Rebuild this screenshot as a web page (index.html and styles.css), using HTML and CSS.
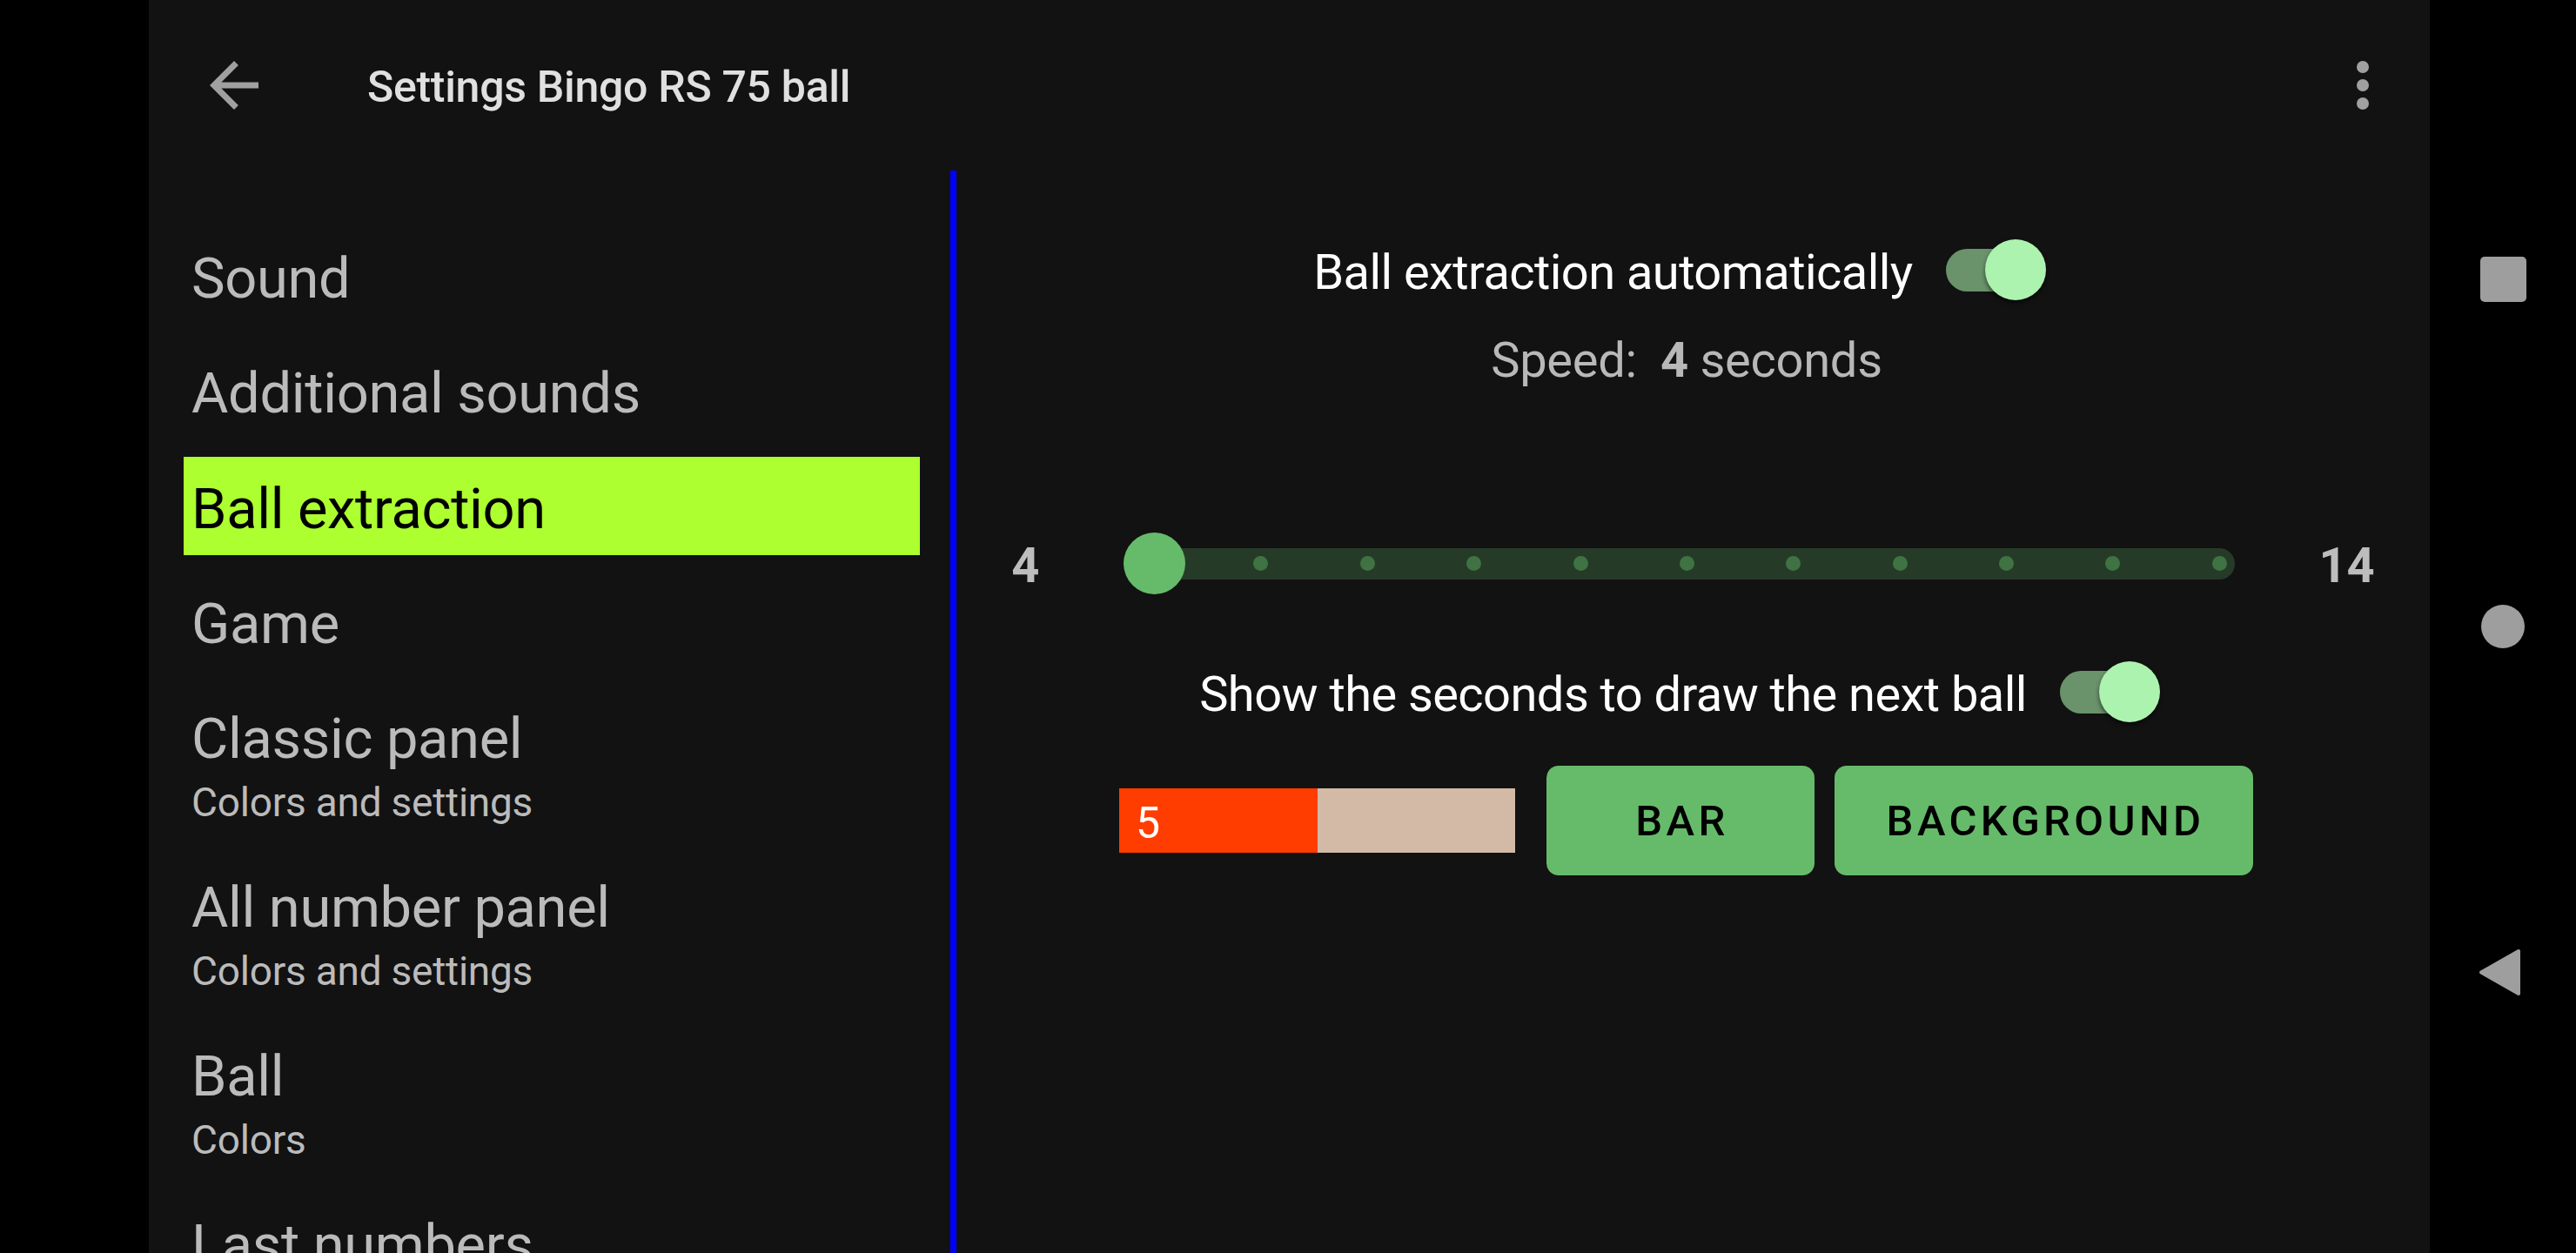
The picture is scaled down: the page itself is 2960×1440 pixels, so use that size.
FILE: index.html
```html
<!DOCTYPE html>
<html lang="en">
<head>
<meta charset="utf-8">
<title>Settings Bingo RS 75 ball</title>
<link rel="stylesheet" href="styles.css">
</head>
<body>
<div class="screen">
  <div class="cutout"></div>
  <div class="app">
    <header class="toolbar">
      <svg class="nav-icon" viewBox="0 0 24 24"><path d="M20 11H7.83l5.59-5.59L12 4l-8 8 8 8 1.41-1.41L7.83 13H20v-2z"/></svg>
      <h1 class="title">Settings Bingo RS 75 ball</h1>
      <svg class="more-icon" viewBox="0 0 24 24"><circle cx="12" cy="6" r="2"/><circle cx="12" cy="12" r="2"/><circle cx="12" cy="18" r="2"/></svg>
    </header>
    <div class="body">
      <nav class="menu">
        <div class="item"><div class="item-title">Sound</div></div>
        <div class="item"><div class="item-title">Additional sounds</div></div>
        <div class="item active"><div class="item-title">Ball extraction</div></div>
        <div class="item"><div class="item-title">Game</div></div>
        <div class="item"><div class="item-title">Classic panel</div><div class="item-sub">Colors and settings</div></div>
        <div class="item"><div class="item-title">All number panel</div><div class="item-sub">Colors and settings</div></div>
        <div class="item"><div class="item-title">Ball</div><div class="item-sub">Colors</div></div>
        <div class="item"><div class="item-title">Last numbers</div><div class="item-sub">Colors</div></div>
      </nav>
      <div class="divider"></div>
      <main class="content">
        <div class="toggle-row row-auto">
          <span class="toggle-label">Ball extraction automatically</span>
          <div class="switch"><div class="switch-track"></div><div class="switch-thumb"></div></div>
        </div>
        <div class="speed">Speed:&nbsp; <b class="speed-value">4</b> seconds</div>
        <div class="slider-row">
          <span class="slider-label slider-min">4</span>
          <div class="slider">
            <div class="slider-track">
              <span class="tick"></span><span class="tick"></span><span class="tick"></span><span class="tick"></span><span class="tick"></span><span class="tick"></span><span class="tick"></span><span class="tick"></span><span class="tick"></span><span class="tick"></span><span class="tick"></span>
            </div>
            <div class="slider-thumb"></div>
          </div>
          <span class="slider-label slider-max">14</span>
        </div>
        <div class="toggle-row row-show">
          <span class="toggle-label">Show the seconds to draw the next ball</span>
          <div class="switch"><div class="switch-track"></div><div class="switch-thumb"></div></div>
        </div>
        <div class="button-row">
          <div class="countdown">
            <div class="countdown-fill">5</div>
            <div class="countdown-rest"></div>
          </div>
          <button class="btn btn-bar">BAR</button>
          <button class="btn btn-bg">BACKGROUND</button>
        </div>
      </main>
    </div>
  </div>
  <div class="navbar">
    <div class="nav-square"></div>
    <div class="nav-circle"></div>
    <svg class="nav-back" viewBox="0 0 49 55"><polygon points="3,27.5 46,3 46,52" /></svg>
  </div>
</div>
</body>
</html>
```
FILE: styles.css
```css
* {
  box-sizing: border-box;
  margin: 0;
  padding: 0;
}

html, body {
  width: 2960px;
  height: 1440px;
  overflow: hidden;
  background: #000;
}

body {
  font-family: Roboto, "Noto Sans", "Liberation Sans", sans-serif;
}

.screen {
  display: flex;
  width: 2960px;
  height: 1440px;
}

.cutout {
  width: 171px;
  flex: none;
  background: #000;
}

.app {
  width: 2621px;
  flex: none;
  background: #121212;
  display: flex;
  flex-direction: column;
  overflow: hidden;
}

/* toolbar */
.toolbar {
  height: 196px;
  flex: none;
  display: flex;
  align-items: center;
  padding-left: 56px;
  padding-right: 35px;
}

.nav-icon,
.more-icon {
  width: 84px;
  height: 84px;
  flex: none;
  fill: #a0a0a0;
}

.title {
  flex: 1;
  margin-left: 111px;
  font-size: 50px;
  font-weight: 500;
  line-height: 58px;
  padding-top: 4px;
  letter-spacing: -0.006em;
  color: #e0e0e0;
  white-space: nowrap;
}

/* body */
.body {
  flex: 1;
  display: flex;
  min-height: 0;
}

.menu {
  width: 921px;
  flex: none;
  padding: 64px 35px 0 40px;
  display: flex;
  flex-direction: column;
  gap: 19.3px;
  overflow: hidden;
}

.item {
  flex: none;
  padding: 17px 7px 10px 9px;
  color: #bbbbbb;
}

.item.active {
  background: #adff2f;
  color: #000;
}

.item-title {
  font-size: 65px;
  line-height: 86px;
  letter-spacing: -0.005em;
  white-space: nowrap;
}

.item-sub {
  font-size: 46px;
  line-height: 61.5px;
  letter-spacing: -0.005em;
  white-space: nowrap;
}

.divider {
  width: 7px;
  flex: none;
  background: #0000ff;
}

/* content */
.content {
  flex: 1;
  display: flex;
  flex-direction: column;
  align-items: center;
  padding-top: 79px;
}

.toggle-row {
  height: 70px;
  display: flex;
  align-items: center;
  gap: 38px;
}

.row-show {
  margin-top: 77px;
}

.toggle-label {
  font-size: 56px;
  line-height: 66px;
  padding-top: 5px;
  letter-spacing: -0.01em;
  color: #ffffff;
  white-space: nowrap;
}

.switch {
  position: relative;
  width: 115px;
  height: 70px;
  flex: none;
  margin-right: 31px;
}

.switch-track {
  position: absolute;
  left: 0;
  top: 10.5px;
  width: 105px;
  height: 49px;
  border-radius: 24.5px;
  background: #6a926b;
}

.switch-thumb {
  position: absolute;
  right: 0;
  top: 0;
  width: 70px;
  height: 70px;
  border-radius: 50%;
  background: #adf3b0;
  box-shadow: 0 3px 5px rgba(0, 0, 0, 0.55);
}

.speed {
  margin-top: 36px;
  margin-right: 15px;
  font-size: 56px;
  line-height: 66px;
  letter-spacing: -0.005em;
  color: #b8b8b8;
  white-space: nowrap;
}

.speed-value {
  font-weight: 700;
}

/* slider */
.slider-row {
  margin-top: 165px;
  height: 71px;
  display: flex;
  align-items: center;
}

.slider-label {
  font-size: 56px;
  font-weight: 700;
  line-height: 66px;
  padding-top: 5px;
  color: #bdbdbd;
}

.slider-min {
  margin-right: 114px;
}

.slider-max {
  margin-left: 96px;
}

.slider {
  position: relative;
  width: 1260px;
  height: 71px;
  display: flex;
  align-items: center;
}

.slider-track {
  width: 100%;
  height: 36px;
  border-radius: 18px;
  background: #263b27;
  display: flex;
  align-items: center;
  justify-content: space-between;
  padding: 0 9.5px;
}

.tick {
  width: 17px;
  height: 17px;
  border-radius: 50%;
  background: #3f7343;
}

.slider-thumb {
  position: absolute;
  left: -17.5px;
  top: 0;
  width: 71px;
  height: 71px;
  border-radius: 50%;
  background: #66bb6a;
}

/* buttons */
.button-row {
  margin-top: 50px;
  margin-right: 16px;
  height: 126px;
  display: flex;
  align-items: center;
}

.countdown {
  width: 455px;
  height: 74px;
  display: flex;
  margin-right: 36px;
}

.countdown-fill {
  width: 228px;
  background: #ff3d00;
  color: #ffffff;
  font-size: 50px;
  line-height: 74px;
  padding-left: 19px;
  padding-top: 3px;
}

.countdown-rest {
  flex: 1;
  background: #d3baa7;
}

.btn {
  height: 126px;
  border: none;
  border-radius: 14px;
  background: #66bb6a;
  color: #000;
  font-family: Roboto, "Noto Sans", "Liberation Sans", sans-serif;
  font-size: 49px;
  font-weight: 500;
  letter-spacing: 0.0892em;
  text-align: center;
  padding: 0 0 0 4px;
}

.btn-bar {
  width: 308px;
  margin-right: 23px;
}

.btn-bg {
  width: 481px;
}

/* system nav bar */
.navbar {
  width: 168px;
  flex: none;
  background: #000;
  display: flex;
  flex-direction: column;
  align-items: center;
  padding-top: 295px;
}

.nav-square {
  width: 53px;
  height: 52px;
  border-radius: 5px;
  background: #9e9e9e;
}

.nav-circle {
  width: 50px;
  height: 50px;
  border-radius: 50%;
  background: #9e9e9e;
  margin-top: 348px;
}

.nav-back {
  width: 49px;
  height: 55px;
  margin-top: 345px;
  margin-right: 7px;
  fill: #9e9e9e;
  stroke: #9e9e9e;
  stroke-width: 4;
  stroke-linejoin: round;
}
```
